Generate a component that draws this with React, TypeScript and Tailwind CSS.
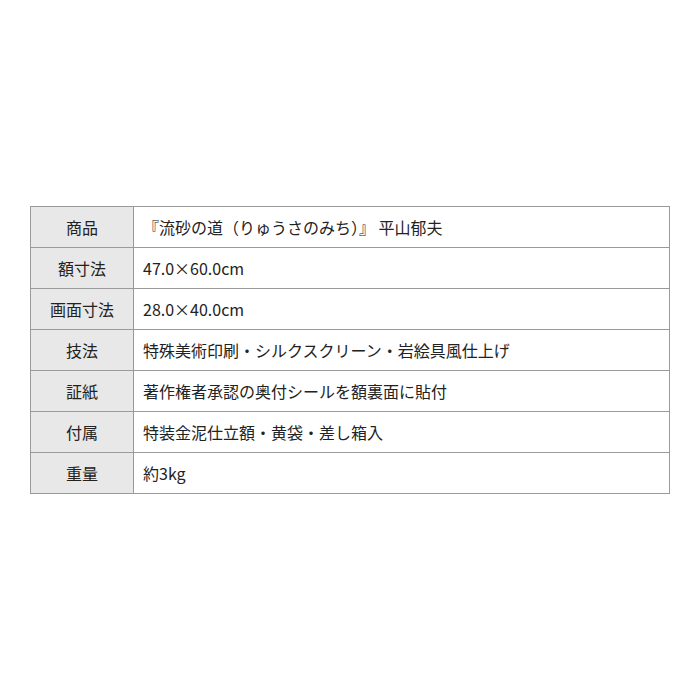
const rows: [string, string][] = [
  ["商品", "『流砂の道（りゅうさのみち）』 平山郁夫"],
  ["額寸法", "47.0×60.0cm"],
  ["画面寸法", "28.0×40.0cm"],
  ["技法", "特殊美術印刷・シルクスクリーン・岩絵具風仕上げ"],
  ["証紙", "著作権者承認の奥付シールを額裏面に貼付"],
  ["付属", "特装金泥仕立額・黄袋・差し箱入"],
  ["重量", "約3kg"],
]

export default function App() {
  return (
    <div
      className="flex min-h-[700px] w-[700px] items-center justify-center bg-white text-[16px] text-[#222]"
      style={{ fontFamily: '"Noto Sans CJK JP", "Noto Sans", sans-serif' }}
    >
      <div className="w-[640px] border-l border-t border-[#9a9a9a]">
        {rows.map(([label, value]) => (
          <div key={label} className="flex h-[41px]">
            <div className="flex w-[103px] items-center justify-center border-b border-r border-[#9a9a9a] bg-[#e8e8e8]">
              {label}
            </div>
            <div className="flex w-[536px] items-center border-b border-r border-[#9a9a9a] pl-[9px]">
              {value}
            </div>
          </div>
        ))}
      </div>
    </div>
  )
}
